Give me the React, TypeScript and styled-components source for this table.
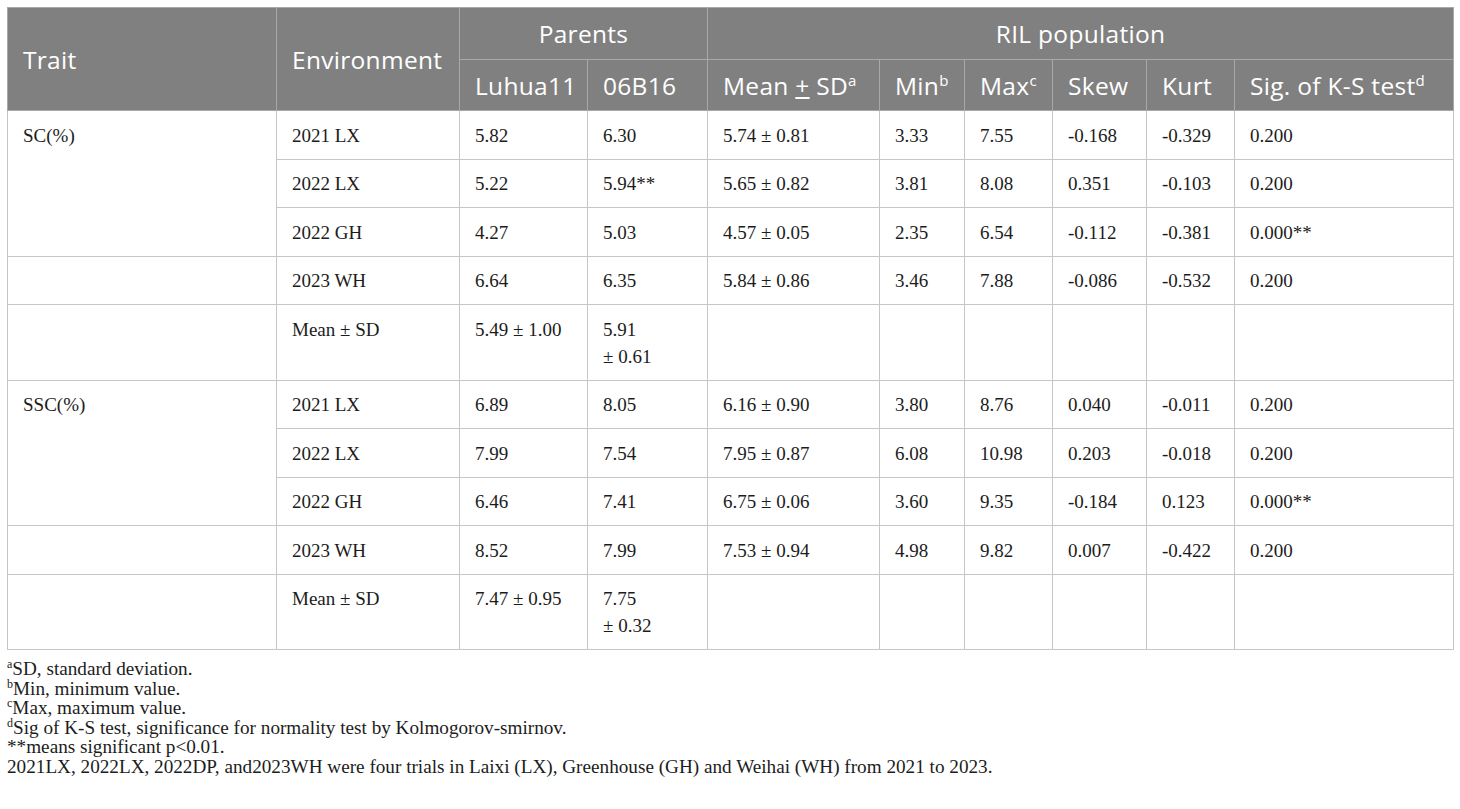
import styled, { createGlobalStyle } from "styled-components";

const GlobalStyle = createGlobalStyle`
  body {
    margin: 0;
    background: #ffffff;
  }
`;

const Page = styled.div`
  padding: 7px;
  width: 1446px;
`;

const Table = styled.table`
  width: 1446px;
  table-layout: fixed;
  border-collapse: collapse;
  border: 1px solid #c6c6c6;
`;

const HeadRow = styled.tr<{ h: number }>`
  height: ${(props) => props.h}px;
`;

const HeadCell = styled.th<{ align?: "left" | "center" }>`
  background-color: #808080;
  color: #ffffff;
  font-family: "Open Sans", "Noto Sans", sans-serif;
  font-weight: 400;
  font-size: 24.5px;
  letter-spacing: 0.3px;
  text-align: ${(props) => props.align || "left"};
  vertical-align: middle;
  padding: 0 15px;
  border: 1px solid #a8a8a8;
  white-space: nowrap;

  sup {
    font-size: 15px;
    line-height: 0;
  }
`;

const Cell = styled.td`
  font-family: "Liberation Serif", "Times New Roman", "DejaVu Serif", serif;
  font-size: 19px;
  line-height: 27px;
  color: #1c1c1c;
  vertical-align: top;
  padding: 10.5px 15px 10px 15px;
  border: 1px solid #c6c6c6;
`;

const Notes = styled.div`
  margin-top: 9px;
  font-family: "Liberation Serif", "Times New Roman", "DejaVu Serif", serif;
  font-size: 19.2px;
  line-height: 19.6px;
  color: #1c1c1c;

  sup {
    font-size: 12px;
    line-height: 0;
  }
`;

const Note = styled.div``;

interface IRow {
  trait?: string;
  traitSpan?: number;
  env: string;
  luhua: string;
  b16: string;
  mean: string;
  min: string;
  max: string;
  skew: string;
  kurt: string;
  sig: string;
}

const rows: IRow[] = [
  { trait: "SC(%)", traitSpan: 3, env: "2021 LX", luhua: "5.82", b16: "6.30", mean: "5.74 ± 0.81", min: "3.33", max: "7.55", skew: "-0.168", kurt: "-0.329", sig: "0.200" },
  { env: "2022 LX", luhua: "5.22", b16: "5.94**", mean: "5.65 ± 0.82", min: "3.81", max: "8.08", skew: "0.351", kurt: "-0.103", sig: "0.200" },
  { env: "2022 GH", luhua: "4.27", b16: "5.03", mean: "4.57 ± 0.05", min: "2.35", max: "6.54", skew: "-0.112", kurt: "-0.381", sig: "0.000**" },
  { trait: "", traitSpan: 1, env: "2023 WH", luhua: "6.64", b16: "6.35", mean: "5.84 ± 0.86", min: "3.46", max: "7.88", skew: "-0.086", kurt: "-0.532", sig: "0.200" },
  { trait: "", traitSpan: 1, env: "Mean ± SD", luhua: "5.49 ± 1.00", b16: "5.91\n± 0.61", mean: "", min: "", max: "", skew: "", kurt: "", sig: "" },
  { trait: "SSC(%)", traitSpan: 3, env: "2021 LX", luhua: "6.89", b16: "8.05", mean: "6.16 ± 0.90", min: "3.80", max: "8.76", skew: "0.040", kurt: "-0.011", sig: "0.200" },
  { env: "2022 LX", luhua: "7.99", b16: "7.54", mean: "7.95 ± 0.87", min: "6.08", max: "10.98", skew: "0.203", kurt: "-0.018", sig: "0.200" },
  { env: "2022 GH", luhua: "6.46", b16: "7.41", mean: "6.75 ± 0.06", min: "3.60", max: "9.35", skew: "-0.184", kurt: "0.123", sig: "0.000**" },
  { trait: "", traitSpan: 1, env: "2023 WH", luhua: "8.52", b16: "7.99", mean: "7.53 ± 0.94", min: "4.98", max: "9.82", skew: "0.007", kurt: "-0.422", sig: "0.200" },
  { trait: "", traitSpan: 1, env: "Mean ± SD", luhua: "7.47 ± 0.95", b16: "7.75\n± 0.32", mean: "", min: "", max: "", skew: "", kurt: "", sig: "" },
];

const widths = [269, 183, 128, 120, 172, 85, 88, 94, 88, 219];

function MultiLine({ text }: { text: string }) {
  const parts = text.split("\n");
  return (
    <>
      {parts.map((p, i) => (
        <span key={i}>
          {p}
          {i < parts.length - 1 && <br />}
        </span>
      ))}
    </>
  );
}

function App() {
  return (
    <Page>
      <GlobalStyle />
      <Table>
        <colgroup>
          {widths.map((w, i) => (
            <col key={i} style={{ width: w }} />
          ))}
        </colgroup>
        <thead>
          <HeadRow h={52}>
            <HeadCell rowSpan={2}>Trait</HeadCell>
            <HeadCell rowSpan={2}>Environment</HeadCell>
            <HeadCell colSpan={2} align="center">
              Parents
            </HeadCell>
            <HeadCell colSpan={6} align="center">
              RIL population
            </HeadCell>
          </HeadRow>
          <HeadRow h={51}>
            <HeadCell>Luhua11</HeadCell>
            <HeadCell>06B16</HeadCell>
            <HeadCell>
              Mean <u>+</u> SD<sup>a</sup>
            </HeadCell>
            <HeadCell>
              Min<sup>b</sup>
            </HeadCell>
            <HeadCell>
              Max<sup>c</sup>
            </HeadCell>
            <HeadCell>Skew</HeadCell>
            <HeadCell>Kurt</HeadCell>
            <HeadCell>
              Sig. of K-S test<sup>d</sup>
            </HeadCell>
          </HeadRow>
        </thead>
        <tbody>
          {rows.map((r, i) => (
            <tr key={i}>
              {r.trait !== undefined && (
                <Cell rowSpan={r.traitSpan}>{r.trait}</Cell>
              )}
              <Cell>{r.env}</Cell>
              <Cell>{r.luhua}</Cell>
              <Cell>
                <MultiLine text={r.b16} />
              </Cell>
              <Cell>{r.mean}</Cell>
              <Cell>{r.min}</Cell>
              <Cell>{r.max}</Cell>
              <Cell>{r.skew}</Cell>
              <Cell>{r.kurt}</Cell>
              <Cell>{r.sig}</Cell>
            </tr>
          ))}
        </tbody>
      </Table>
      <Notes>
        <Note>
          <sup>a</sup>SD, standard deviation.
        </Note>
        <Note>
          <sup>b</sup>Min, minimum value.
        </Note>
        <Note>
          <sup>c</sup>Max, maximum value.
        </Note>
        <Note>
          <sup>d</sup>Sig of K-S test, significance for normality test by
          Kolmogorov-smirnov.
        </Note>
        <Note>**means significant p&lt;0.01.</Note>
        <Note>
          2021LX, 2022LX, 2022DP, and2023WH were four trials in Laixi (LX),
          Greenhouse (GH) and Weihai (WH) from 2021 to 2023.
        </Note>
      </Notes>
    </Page>
  );
}

export default App;
